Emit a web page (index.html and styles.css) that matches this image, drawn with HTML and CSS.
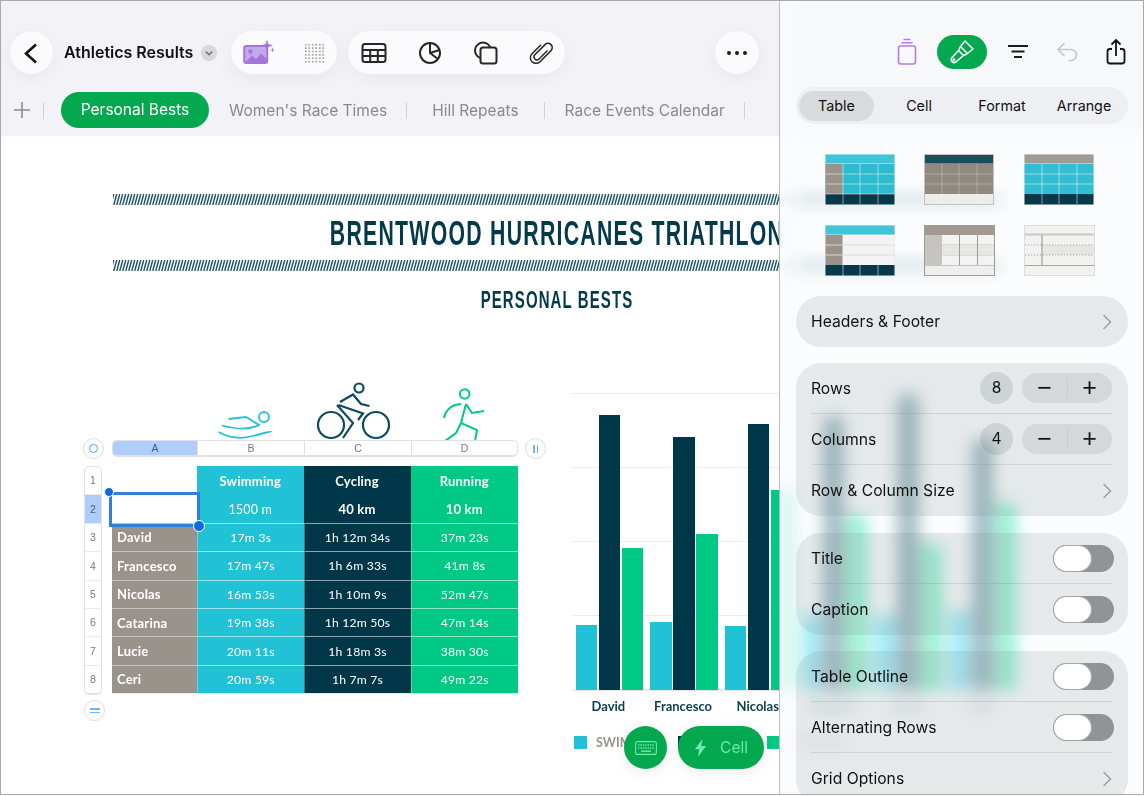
FILE: index.html
```html
<!DOCTYPE html>
<html lang="en">
<head>
<meta charset="utf-8">
<title>Athletics Results</title>
<link rel="stylesheet" href="styles.css">
</head>
<body>
<div class="device">
  <main class="main">
    <header class="topbar">
      <div class="toolbar">
        <button class="circle back"><svg width="42" height="42" viewBox="0 0 42 42"><path class="s-dark" d="M25 12.500 15 21.500 25 30.500"/></svg></button>
        <div class="doc-title">Athletics Results</div>
        <span class="doc-caret"><svg width="16" height="16" viewBox="0 0 16 16"><path d="M4.800 6.500 8 9.700 11.200 6.500" fill="none" stroke="#707074" stroke-width="1.500"/></svg></span>
        <div class="pill pill-media">
          <svg width="32" height="28" viewBox="0 0 32 28"><rect class="media-frame" x="1.200" y="7" width="23" height="17" rx="2"/><circle cx="7.500" cy="12.500" r="2.200" fill="#a476dc"/><path d="M1.500 24 9 16.500l4 3.500 5-5.500 6 6V24z" fill="#a476dc"/><path d="M24 .5l1.400 4.600L30 6.500l-4.600 1.400L24 12.500l-1.400-4.600L18 6.500l4.600-1.400zM29.500 8.500l.6 1.900 1.900.6-1.900.6-.6 1.900-.6-1.900-1.900-.6 1.900-.6z" fill="#a476dc"/></svg>
          <span class="dots"></span>
        </div>
        <div class="pill pill-insert">
          <svg width="28" height="24" viewBox="0 0 28 24"><rect class="s-ink" x="2.500" y="3" width="23" height="18" rx="2.500"/><path class="s-ink" d="M2.500 9h23M2.500 15h23M10.200 9v12M17.800 9v12"/></svg>
          <svg width="28" height="24" viewBox="0 0 28 24"><circle class="s-ink" cx="14" cy="12" r="10"/><path class="s-ink" d="M14 2v10l8 6M14 12l9.500-3"/></svg>
          <svg width="28" height="24" viewBox="0 0 28 24"><circle class="s-ink" cx="11" cy="9.500" r="8"/><rect class="s-ink fill-pill" x="8.500" y="6.500" width="16" height="16" rx="2.500"/></svg>
          <svg width="28" height="24" viewBox="0 0 28 24"><path class="s-ink-thin" d="M19.500 9.500 10.800 18.200a3 3 0 0 1-4.200-4.200L17 3.600a4.200 4.200 0 0 1 6 6L12 20.700a5.600 5.600 0 0 1-8-8l9-9"/></svg>
        </div>
        <button class="circle more"><svg width="24" height="6" viewBox="0 0 24 6"><circle cx="4" cy="3" r="2" fill="#1c1c1e"/><circle cx="12" cy="3" r="2" fill="#1c1c1e"/><circle cx="20" cy="3" r="2" fill="#1c1c1e"/></svg></button>
      </div>
      <nav class="tabs">
        <svg class="add" width="18" height="18" viewBox="0 0 18 18"><path d="M9 1v16M1 9h16" stroke="#8a8a8e" stroke-width="1.600"/></svg>
        <i class="tab-sep first"></i>
        <span class="tab active">Personal Bests</span>
        <span class="tab">Women's Race Times</span><i class="tab-sep"></i>
        <span class="tab wide">Hill Repeats</span><i class="tab-sep"></i>
        <span class="tab">Race Events Calendar</span><i class="tab-sep"></i>
      </nav>
    </header>

    <section class="canvas">
      <div class="masthead">
        <svg class="stripes" width="888" height="11" viewBox="0 0 888 11"><defs><pattern id="hatch" width="3" height="11" patternUnits="userSpaceOnUse"><path d="M3.750 0 .75 11M.75 0-2.250 11M6.750 0 3.750 11" stroke="#1f5263" stroke-width="1.400"/></pattern></defs><rect width="888" height="11" fill="url(#hatch)"/></svg>
        <h1 class="title">BRENTWOOD HURRICANES TRIATHLON</h1>
        <svg class="stripes" width="888" height="11" viewBox="0 0 888 11"><rect width="888" height="11" fill="url(#hatch)"/></svg>
        <h2 class="subtitle">PERSONAL BESTS</h2>
      </div>

      <div class="sheets">
        <div class="sheet">
          <div class="sport-icons">
            <svg width="107" height="60" viewBox="197 380 107 60"><g class="s-cyan"><circle cx="264" cy="417" r="5"/><path d="M228.500 419 246 417 259 425Q245 432 222 425.500"/><path d="M218.500 432Q235 441 253 436T271 432"/></g></svg>
            <svg width="107" height="60" viewBox="304 380 107 60"><g class="s-navy"><circle cx="359" cy="388" r="4.500"/><circle cx="331" cy="425" r="13"/><circle cx="376" cy="425" r="13"/><path d="M340 402 353 394.500 361 404 369.500 406M338.500 405 363 413.500 358 420M337 405 353 423 343 438"/></g></svg>
            <svg width="107" height="60" viewBox="411 380 107 60"><g class="s-green"><circle cx="464.700" cy="394" r="4.800"/><path d="M461 404Q447 405 444 418M466 404 461 423 477 430 475 441M461 423 456 433 445 441M466 404 472 413 484 411"/></g></svg>
          </div>
          <div class="col-heads">
            <span class="handle corner"><i class="ring"></i></span>
            <div class="col-bar"><span class="sel">A</span><span>B</span><span>C</span><span>D</span></div>
            <span class="handle pause"><i></i><i></i></span>
          </div>
          <div class="table-wrap">
            <div class="row-heads"><span>1</span><span class="sel">2</span><span>3</span><span>4</span><span>5</span><span>6</span><span>7</span><span>8</span></div>
            <div class="table">
              <div class="blank"></div><div class="th c1">Swimming</div><div class="th c2">Cycling</div><div class="th c3">Running</div>
              <div class="blank"></div><div class="th c1 sub">1500 m</div><div class="th c2 strong">40 km</div><div class="th c3 strong">10 km</div>
              <div class="nm">David</div><div class="td c1">17m 3s</div><div class="td c2">1h 12m 34s</div><div class="td c3">37m 23s</div>
              <div class="nm">Francesco</div><div class="td c1">17m 47s</div><div class="td c2">1h 6m 33s</div><div class="td c3">41m 8s</div>
              <div class="nm">Nicolas</div><div class="td c1">16m 53s</div><div class="td c2">1h 10m 9s</div><div class="td c3">52m 47s</div>
              <div class="nm">Catarina</div><div class="td c1">19m 38s</div><div class="td c2">1h 12m 50s</div><div class="td c3">47m 14s</div>
              <div class="nm">Lucie</div><div class="td c1">20m 11s</div><div class="td c2">1h 18m 3s</div><div class="td c3">38m 30s</div>
              <div class="nm">Ceri</div><div class="td c1">20m 59s</div><div class="td c2">1h 7m 7s</div><div class="td c3">49m 22s</div>
              <div class="selection"><i class="knob tl"></i><i class="knob br"></i></div>
            </div>
          </div>
          <span class="handle equals"><i></i><i></i></span>
        </div>

        <div class="chart">
          <div class="plot">
            <div class="grp"><b class="c1" style="height:65px"></b><b class="c2" style="height:275px"></b><b class="c3" style="height:142px"></b></div>
            <div class="grp"><b class="c1" style="height:68px"></b><b class="c2" style="height:253px"></b><b class="c3" style="height:156px"></b></div>
            <div class="grp"><b class="c1" style="height:64px"></b><b class="c2" style="height:266px"></b><b class="c3" style="height:200px"></b></div>
            <div class="grp"><b class="c1" style="height:76px"></b><b class="c2" style="height:273px"></b><b class="c3" style="height:175px"></b></div>
            <div class="grp"><b class="c1" style="height:75px"></b><b class="c2" style="height:295px"></b><b class="c3" style="height:145px"></b></div>
            <div class="grp"><b class="c1" style="height:80px"></b><b class="c2" style="height:250px"></b><b class="c3" style="height:187px"></b></div>
          </div>
          <div class="labels"><span>David</span><span>Francesco</span><span>Nicolas</span><span>Catarina</span><span>Lucie</span><span>Ceri</span></div>
          <div class="legend"><i class="c1"></i><span class="l1">SWIMMING</span><i class="c2"></i><span class="l2">CYCLING</span><i class="c3"></i><span>RUNNING</span></div>
        </div>
      </div>

      <div class="floats">
        <button class="fab kb"><svg width="22" height="14" viewBox="0 0 22 14"><rect x=".6" y=".6" width="20.800" height="12.800" rx="2" fill="none" stroke="#6fe8ae" stroke-width="1.100"/><path d="M3 4h16M3 7h16" stroke="#6fe8ae" stroke-width="1.500" stroke-dasharray="1.400 1"/><path d="M6 10.200h10" stroke="#6fe8ae" stroke-width="1.400"/></svg></button>
        <button class="fab cell"><svg width="13" height="18" viewBox="0 0 13 18"><path d="M8.500 0 .8 10.200h4.400L3.800 18l8.400-11H7.300z" fill="#6fe8ae"/></svg><span>Cell</span></button>
      </div>
    </section>
  </main>

  <aside class="panel">
    <div class="panel-tools">
      <svg width="36" height="34" viewBox="0 0 36 34"><g fill="none" stroke="#b27ce8" stroke-width="1.600"><rect x="9.500" y="11" width="17" height="18" rx="2.200"/><path d="M12.500 7.800h11M14.500 4.500h7"/></g></svg>
      <button class="brush"><svg width="26" height="26" viewBox="0 0 26 26"><g fill="none" stroke="#fff" stroke-width="1.500" stroke-linejoin="round"><path d="M16 2 24 10 18.500 14.500 11.500 7.500Z"/><path d="M11.500 7.500 9.500 11.500 L2.800 18.700a3 3 0 0 0 4.200 4.200L14.500 16.500 18.500 14.500"/><path d="M9.500 11.500 14.500 16.500"/><circle cx="5" cy="20.800" r=".7"/></g></svg></button>
      <svg class="gap-l" width="24" height="24" viewBox="0 0 24 24"><path d="M2 6h20M5.500 11.500h13M8 17h8" stroke="#1c1c1e" stroke-width="1.800" fill="none"/></svg>
      <svg class="gap-m" width="24" height="24" viewBox="0 0 24 24"><path d="M9.500 3 3 9.500 9.500 16M3.500 9.500H16a5.500 5.500 0 0 1 0 11h-2.500" fill="none" stroke="#c7c7cc" stroke-width="1.700"/></svg>
      <svg class="gap-m" width="24" height="28" viewBox="0 0 24 28"><path d="M8 11H6a2.500 2.500 0 0 0-2.500 2.500v9.500A2.500 2.500 0 0 0 6 25.500h12a2.500 2.500 0 0 0 2.500-2.500v-9.500A2.500 2.500 0 0 0 18 11h-2M12 18V2M7.500 6.500 12 2l4.500 4.500" fill="none" stroke="#111" stroke-width="1.800"/></svg>
    </div>

    <div class="segmented"><span class="on">Table</span><span>Cell</span><span>Format</span><span>Arrange</span></div>

    <div class="thumbs">
      <svg width="70" height="51" viewBox="0 0 70 51"><rect width="70" height="51" fill="#e8ecee"/><rect x=".5" y=".5" width="69" height="9" fill="#3fc3d7"/><rect x=".5" y="10" width="69" height="30" fill="#2dbccf"/><rect x=".5" y="10" width="17" height="30" fill="#9a938c"/><rect x=".5" y="40" width="69" height="10.500" fill="#07394a"/><path d="M.5 20h69M.5 30h69M18 10v40M35 10v40M53 10v40M.5 40h69" stroke="#fff" stroke-opacity=".55" stroke-width=".9"/></svg>
      <svg width="70" height="51" viewBox="0 0 70 51"><rect width="70" height="51" fill="#c4c0ba"/><rect x="1" y="1" width="68" height="8.500" fill="#1b4d5e"/><rect x="1" y="10" width="68" height="30" fill="#8f8981"/><rect x="1" y="40" width="68" height="10" fill="#ececec"/><path d="M1 20h68M1 30h68M18 10v40M35 10v40M53 10v40" stroke="#fff" stroke-opacity=".3" stroke-width=".9"/></svg>
      <svg width="70" height="51" viewBox="0 0 70 51"><rect width="70" height="51" fill="#e8ecee"/><rect x=".5" y=".5" width="69" height="9" fill="#a09a93"/><rect x=".5" y="10" width="69" height="30" fill="#33bdd0"/><rect x=".5" y="40" width="69" height="10.500" fill="#07394a"/><path d="M.5 20h69M.5 30h69M18 10v40M35 10v40M53 10v40" stroke="#fff" stroke-opacity=".55" stroke-width=".9"/></svg>
      <svg width="70" height="51" viewBox="0 0 70 51"><rect width="70" height="51" fill="#e3e6e7"/><rect x=".5" y=".5" width="69" height="9" fill="#41c5d8"/><rect x=".5" y="10" width="69" height="30" fill="#f3f3f3"/><rect x=".5" y="10" width="17" height="30" fill="#9a938c"/><rect x=".5" y="40" width="69" height="10.500" fill="#07394a"/><path d="M.5 20h69M.5 30h69" stroke="#dcdcdc" stroke-width=".9"/><path d="M18 40v11M35 40v11M53 40v11" stroke="#fff" stroke-opacity=".6" stroke-width=".9"/></svg>
      <svg width="71" height="51" viewBox="0 0 71 51"><rect width="71" height="51" fill="#a09a93"/><rect x="1" y="10" width="69" height="30" fill="#f3f3f2"/><rect x="1" y="10" width="17" height="30" fill="#c5c4bf"/><rect x="1" y="40.500" width="69" height="9.500" fill="#efeeee"/><path d="M18 20h52M18 30h52" stroke="#bdbab5" stroke-width=".9"/><rect x="18" y="20" width="52" height="10" fill="#e7e6e4"/><path d="M35.500 10v30M53.500 10v30" stroke="#a09a93" stroke-width="1"/></svg>
      <svg width="71" height="51" viewBox="0 0 71 51"><rect width="71" height="51" fill="#f2f2f1"/><rect x=".5" y=".5" width="70" height="50" fill="none" stroke="#dedddb"/><rect x="18" y="20" width="52" height="10" fill="#e6e5e1"/><path d="M1 9.500h69" stroke="#c9c7c2" stroke-width="2"/><path d="M1 20h69M1 30h69" stroke="#a8a49e" stroke-dasharray="1.200 1.800"/><path d="M18 10v30" stroke="#b5b2ac" stroke-width="1.600"/><path d="M1 40.500h69" stroke="#a8a49e" stroke-width="1"/></svg>
    </div>

    <div class="group one"><div class="row"><span>Headers &amp; Footer</span><svg class="chev" width="10" height="16" viewBox="0 0 10 16"><path d="M1.500 1 8.500 8 1.500 15" fill="none" stroke="#9d9fa1" stroke-width="1.500"/></svg></div></div>

    <div class="group tall">
      <div class="row"><span>Rows</span><div class="ctl"><span class="val">8</span><span class="step"><em>−</em><em>+</em></span></div></div>
      <div class="row"><span>Columns</span><div class="ctl"><span class="val">4</span><span class="step"><em>−</em><em>+</em></span></div></div>
      <div class="row"><span>Row &amp; Column Size</span><svg class="chev" width="10" height="16" viewBox="0 0 10 16"><path d="M1.500 1 8.500 8 1.500 15" fill="none" stroke="#9d9fa1" stroke-width="1.500"/></svg></div>
    </div>

    <div class="group">
      <div class="row"><span>Title</span><span class="toggle"></span></div>
      <div class="row"><span>Caption</span><span class="toggle"></span></div>
    </div>

    <div class="group">
      <div class="row"><span>Table Outline</span><span class="toggle"></span></div>
      <div class="row"><span>Alternating Rows</span><span class="toggle"></span></div>
      <div class="row"><span>Grid Options</span><svg class="chev" width="10" height="16" viewBox="0 0 10 16"><path d="M1.500 1 8.500 8 1.500 15" fill="none" stroke="#9d9fa1" stroke-width="1.500"/></svg></div>
    </div>
  </aside>
</div>
</body>
</html>
```

FILE: styles.css
```css
* { box-sizing: border-box; }
html, body { margin: 0; height: 100%; background: #fff; overflow: hidden; }
body { font-family: Inter, "Noto Sans", sans-serif; color: #1c1c1e; }
button { border: 0; padding: 0; font: inherit; }

.device { position: relative; width: 1144px; height: 795px; border: 1px solid #a9a9ab; overflow: hidden; background: #fff; }
.main { width: 1142px; height: 793px; display: flex; flex-direction: column; }

.topbar { height: 135px; flex: none; background: #f2f2f7; padding: 30px 0 0 9px; }
.toolbar { display: flex; align-items: center; height: 43px; }
.circle { width: 43px; height: 43px; border-radius: 50%; background: #fbfbfe; display: flex; align-items: center; justify-content: center; box-shadow: 0 4px 18px rgba(0,0,0,.05); flex: none; }
.back { margin-right: 11px; }
.more { margin-left: 150px; width: 44px; }
.doc-title { font-size: 16px; font-weight: 600; color: #111; width: 130px; white-space: nowrap; margin-top: -2px; }
.doc-caret { width: 16px; height: 16px; border-radius: 50%; background: #d8d8dc; margin: 0 14px 0 7px; flex: none; }
.pill { height: 43px; border-radius: 22px; background: #fbfbfe; display: flex; align-items: center; box-shadow: 0 4px 18px rgba(0,0,0,.05); flex: none; }
.pill-media { width: 106px; padding: 0 0 0 12px; margin-right: 11px; }
.media-frame { fill: #c3a9ec; stroke: #a476dc; stroke-width: 2; }
.dots { width: 21px; height: 20px; margin-left: 29px; background: radial-gradient(circle, #a5a5aa 0.9px, transparent 1.100px) 0 0 / 3.500px 3.400px; }
.pill-insert { width: 217px; padding-left: 12px; gap: 28px; }
.s-dark { fill: none; stroke: #111; stroke-width: 2.600; }
.s-ink { fill: none; stroke: #26262a; stroke-width: 2; }
.s-ink-thin { fill: none; stroke: #26262a; stroke-width: 1.500; }
.fill-pill { fill: #fbfbfe; }

.tabs { display: flex; align-items: center; height: 36px; margin-top: 18px; padding-left: 3px; color: #8a8a8e; font-size: 15.500px; }
.add { margin-right: 12px; flex: none; }
.tab-sep { display: block; width: 1px; height: 17px; background: #d2d2d6; flex: none; }
.tab-sep.first { margin-right: 17px; }
.tab { white-space: nowrap; padding: 0 19px 0 20px; }
.tab.wide { padding: 0 25px; }
.tab.active { background: #04a84e; color: #fff; height: 36px; line-height: 36px; border-radius: 18px; width: 148px; padding: 0; text-align: center; }

.canvas { position: relative; flex: 1; background: #fff; overflow: hidden; }
.masthead { width: 888px; margin: 58px 0 0 112px; text-align: center; color: #023a4c; }
.stripes { display: block; }
.title { margin: 0; height: 55px; font: 700 35px/55px "Liberation Sans", sans-serif; letter-spacing: 2.100px; white-space: nowrap; transform: scaleX(.607); }
.subtitle { margin: 16px 0 0; font: 700 23px/26px "Liberation Sans", sans-serif; letter-spacing: 1.700px; transform: scaleX(.652); }

.sheets { display: flex; margin: 67px 0 0 83px; font-family: Lato, sans-serif; }
.sheet { width: 488px; flex: none; position: relative; }
.sport-icons { display: flex; height: 60px; margin-left: 113px; }
.sport-icons svg { flex: none; display: block; }
.s-cyan { fill: none; stroke: #21c1d6; stroke-width: 1.800; }
.s-navy { fill: none; stroke: #0e4a5e; stroke-width: 2.200; }
.s-green { fill: none; stroke: #00c985; stroke-width: 2; }

.col-heads { position: relative; height: 17px; margin-left: 28px; width: 406px; z-index: 1; }
.col-bar { display: grid; grid-template-columns: 84px 107px 107px 1fr; height: 17px; border: 1px solid #e2e2e4; border-bottom-width: 2px; border-radius: 5px; background: #fff; overflow: hidden; font: 10.500px/14px "Liberation Sans", sans-serif; color: #77777b; text-align: center; }
.col-bar span + span { border-left: 1px solid #e2e2e4; }
.col-bar .sel { background: #aecdfb; color: #4d5d75; }
.handle { position: absolute; width: 21px; height: 21px; border-radius: 50%; background: #fff; border: 1px solid #dcdcde; display: flex; align-items: center; justify-content: center; gap: 2px; }
.corner { left: -29px; top: -2px; }
.pause { right: -28px; top: -2px; }
.pause i { width: 1.500px; height: 8px; background: #6fb4ff; }
.ring { width: 9px; height: 9px; border-radius: 50%; border: 1.500px solid #4aa3ff; }
.equals { left: 0; top: 320px; flex-direction: column; }
.equals i { width: 10px; height: 1.500px; background: #6fb4ff; }

.table-wrap { display: flex; margin-top: 9px; }
.row-heads { width: 18px; height: 229px; flex: none; margin-right: 10px; border: 1px solid #e2e2e4; border-bottom-width: 2px; border-radius: 5px; display: flex; flex-direction: column; overflow: hidden; font: 10.500px/1 "Liberation Sans", sans-serif; color: #77777b; }
.row-heads span { flex: 1; display: flex; align-items: center; justify-content: center; }
.row-heads span + span { border-top: 1px solid #e8e8ea; }
.row-heads .sel { background: #aecdfb; color: #4d5d75; }
.table { position: relative; display: grid; grid-template-columns: 85px 106.500px 107px 107.500px; grid-auto-rows: 28.400px; font-size: 12.200px; color: #fff; letter-spacing: .2px; height: 228px; border-bottom: 1px solid #dfe9ee; }
.th, .td, .nm { display: flex; align-items: center; justify-content: center; white-space: nowrap; }
.th { font-weight: 700; font-size: 13px; padding-top: 1px; }
.th.sub { font-weight: 400; font-size: 12.500px; }
.td { border-top: 1px solid rgba(255,255,255,.55); border-left: 1px solid rgba(255,255,255,.3); }
.nm { background: #9a938c; justify-content: flex-start; padding-left: 5px; font-weight: 700; font-size: 13px; border-top: 1px solid rgba(255,255,255,.45); }
.c1 { background: #21c1d6; }
.c2 { background: #003748; }
.c3 { background: #00c985; }
.selection { position: absolute; left: -3px; top: 26px; width: 91px; height: 35px; border: 3px solid #2f80dc; background: transparent; }
.knob { position: absolute; border-radius: 50%; background: #1268e0; border: 1.500px solid #fff; width: 10px; height: 10px; }
.knob.tl { left: -8px; top: -8px; }
.knob.br { right: -8px; bottom: -8px; width: 12px; height: 12px; }

.chart { flex: none; width: 460px; padding-top: 13px; color: #0f3d4e; }
.plot { display: flex; align-items: flex-end; height: 298px; padding-left: 3.500px; border-bottom: 1px solid #e6e6e6; background: repeating-linear-gradient(to bottom, #ececec 0 1px, transparent 1px 74px); }
.grp { display: flex; align-items: flex-end; gap: 1.500px; width: 74.700px; flex: none; }
.grp b { display: block; width: 21.500px; }
.labels { display: flex; padding-left: 3px; margin-top: 7px; font-size: 13px; font-weight: 700; line-height: 16px; }
.labels span { width: 74.700px; text-align: center; flex: none; padding-right: 8px; white-space: nowrap; }
.legend { display: flex; align-items: center; margin-top: 21px; padding-left: 2px; font-size: 12.500px; font-weight: 700; color: #9a938c; height: 14px; }
.legend i { width: 13px; height: 13px; flex: none; margin-right: 9px; }
.l1 { width: 82px; }
.l2 { width: 67px; }

.floats { position: absolute; left: 623px; top: 590px; display: flex; gap: 11px; }
.fab { height: 43px; background: #04a84e; color: #6fe8ae; display: flex; align-items: center; justify-content: center; box-shadow: 0 3px 14px rgba(0,0,0,.08); }
.fab.kb { width: 43px; border-radius: 50%; }
.fab.cell { width: 86px; border-radius: 22px; gap: 13px; font-size: 15.500px; }

.panel { position: absolute; left: 778px; top: 0; width: 364px; height: 793px; border-left: 1px solid #b7c0c2; padding: 33px 15px 0 16px; display: flex; flex-direction: column; background: linear-gradient(to right, rgba(250,251,252,.94), rgba(250,251,252,.68) 30px); backdrop-filter: blur(8px) saturate(140%); overflow: hidden; }
.panel-tools { display: flex; align-items: center; justify-content: flex-end; height: 35px; flex: none; }
.panel-tools svg { flex: none; }
.brush { width: 50px; height: 34px; border-radius: 17px; background: #04a84e; display: flex; align-items: center; justify-content: center; margin: 0 19px 0 12px; flex: none; }
.gap-l { margin-right: 25px; }
.gap-m { margin-right: 25px; }
.gap-m:last-child { margin-right: 0; }
.segmented { margin-top: 18px; height: 37px; flex: none; border-radius: 18.500px; background: #eeeff2; padding: 3px 0 3px 3px; display: grid; grid-template-columns: 75px 90px 76px 1fr; align-items: center; text-align: center; font-size: 14.300px; color: #111; }
.segmented span { height: 30px; line-height: 30px; border-radius: 15px; }
.segmented .on { background: #d9dadd; }
.thumbs { display: grid; grid-template-columns: 70px 71px 71px; column-gap: 29px; row-gap: 20px; margin: 30px 0 20px 29px; flex: none; }
.thumbs svg { display: block; }

.group { flex: none; border-radius: 25px; background: rgba(110,125,130,.15); padding: 0 16px 0 15px; margin-bottom: 16px; }
.group.tall { margin-bottom: 17px; }
.row { height: 51px; display: flex; align-items: center; justify-content: space-between; font-size: 15.700px; color: #111; border-bottom: 1px solid rgba(110,125,130,.2); white-space: nowrap; }
.row:last-child { border-bottom: 0; }
.chev { flex: none; }
.ctl { display: flex; align-items: center; gap: 9px; }
.val { width: 33px; height: 32px; border-radius: 50%; background: rgba(110,125,130,.2); text-align: center; line-height: 32px; font-size: 15.500px; }
.step { width: 90px; height: 30px; border-radius: 15px; background: rgba(110,125,130,.16); display: flex; }
.step em { flex: 1; font-style: normal; font-size: 25px; line-height: 28px; text-align: center; font-family: "Liberation Sans", sans-serif; }
.step em + em { background: linear-gradient(#c6cbcd, #c6cbcd) left center / 1px 20px no-repeat; }
.toggle { display: block; width: 61px; height: 27px; margin-right: -2px; border-radius: 14px; background: #8f9494; position: relative; }
.toggle::after { content: ""; position: absolute; left: 1px; top: 1px; width: 37px; height: 25px; border-radius: 13px; background: #fff; box-shadow: 0 0 0 1px #a5a8a8; }
```
